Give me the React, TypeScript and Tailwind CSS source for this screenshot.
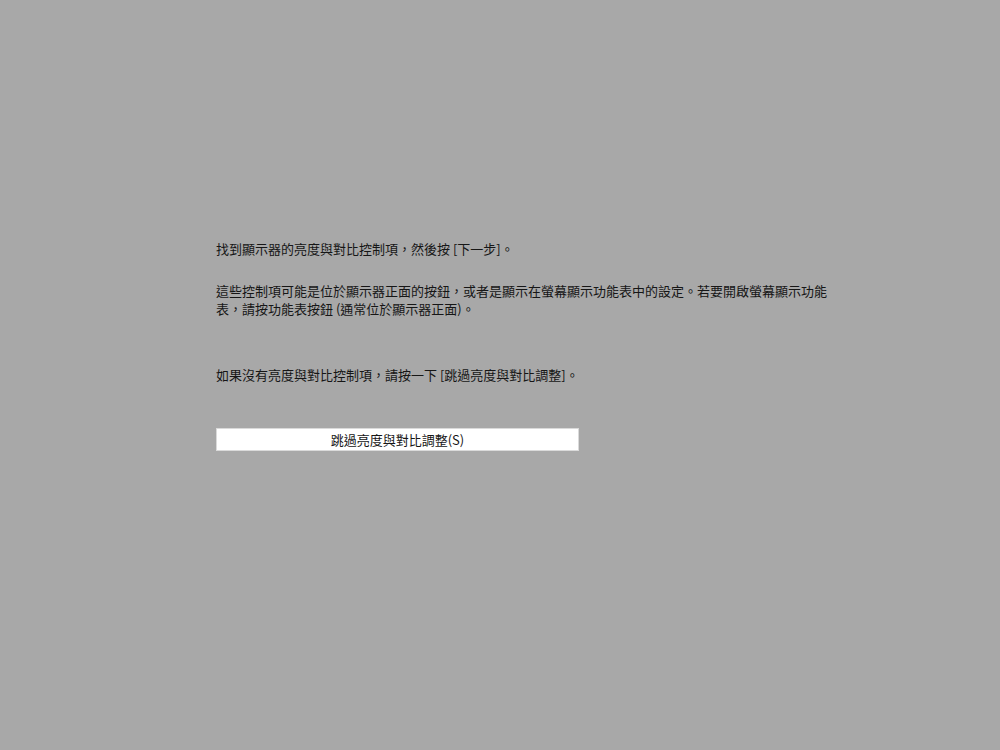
export default function App() {
  return (
    <div
      className="w-[1000px] h-[750px] bg-[#a8a8a8] text-[#161616] overflow-hidden"
      style={{ fontFamily: '"Noto Sans CJK TC", "Noto Sans", sans-serif' }}
    >
      <div className="pt-[240px] pl-[216px] w-[836px] text-[13px] leading-[18px]">
        <p>找到顯示器的亮度與對比控制項，然後按 [下一步]。</p>
        <p className="mt-[24px]">
          這些控制項可能是位於顯示器正面的按鈕，或者是顯示在螢幕顯示功能表中的設定。若要開啟螢幕顯示功能表，請按功能表按鈕 (通常位於顯示器正面)。
        </p>
        <p className="mt-[48px]">如果沒有亮度與對比控制項，請按一下 [跳過亮度與對比調整]。</p>
        <button className="mt-[44px] w-[363px] h-[23px] bg-white border border-[#dadada] flex items-center justify-center text-[13px] text-[#161616]">
          跳過亮度與對比調整(S)
        </button>
      </div>
    </div>
  );
}
